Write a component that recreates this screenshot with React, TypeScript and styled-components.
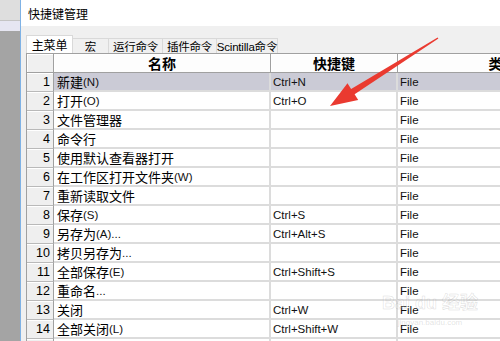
import React from "react";
import styled, { createGlobalStyle } from "styled-components";

const Global = createGlobalStyle`
  html, body { margin: 0; padding: 0; }
  body {
    width: 500px; height: 341px; overflow: hidden;
    background: #a6a6a6;
    font-family: "Liberation Sans", "Noto Sans CJK SC", sans-serif;
  }
`;

const Page = styled.div`
  position: relative;
  display: flex;
  width: 500px;
  height: 341px;
  overflow: hidden;
`;

const SideStrip = styled.div`
  width: 20px;
  flex: none;
  display: flex;
  flex-direction: column;
  border-right: 1px solid #7fb2e5;
`;

const SideTop = styled.div`
  height: 20px;
  background: #dedede;
  border-bottom: 1px solid #c4c4c4;
`;

const SideBand = styled.div`
  height: 10px;
  background: #e6e6f2;
`;

const SideRest = styled.div`
  flex: 1;
  background: #a4a4a4;
`;

const Window = styled.div`
  flex: 1;
  min-width: 0;
  display: flex;
  flex-direction: column;
  background: #fff;
`;

const TitleBar = styled.div`
  height: 26px;
  flex: none;
  display: flex;
  align-items: center;
  padding-left: 7px;
  font-size: 12px;
  color: #000;
  background: #fff;
`;

const Body = styled.div`
  flex: 1;
  background: #f0f0f0;
  padding: 9px 0 0 5px;
  display: flex;
  flex-direction: column;
`;

const TabStrip = styled.div`
  display: flex;
  align-items: flex-end;
  height: 18px;
  flex: none;
`;

const Tab = styled.div<{ $active?: boolean; $w: number }>`
  box-sizing: border-box;
  width: ${(p) => p.$w}px;
  height: ${(p) => (p.$active ? 18 : 15)}px;
  background: ${(p) => (p.$active ? "#fff" : "#f0f0f0")};
  border: 1px solid #d9d9d9;
  border-bottom: none;
  margin-left: ${(p) => (p.$active ? 0 : -1)}px;
  display: flex;
  align-items: center;
  justify-content: center;
  font-size: ${(p) => (p.$active ? 12 : 11.5)}px;
  letter-spacing: -0.2px;
  color: #000;
  white-space: nowrap;
  &:first-child { margin-left: 0; }
`;

const Panel = styled.div`
  flex: 1;
  background: #fff;
  display: flex;
  flex-direction: column;
  min-width: 0;
`;

const Grid = styled.div`
  display: grid;
  grid-template-columns: 27px 217px 127px 210px;
  grid-auto-rows: 19px;
  grid-template-rows: 19px;
  border-top: 1px solid #a0a0a0;
  border-left: 1px solid #a0a0a0;
  width: max-content;
`;

const HeadCell = styled.div<{ $corner?: boolean }>`
  box-sizing: border-box;
  background: ${(p) => (p.$corner ? "#f0f0f0" : "#fdfdfd")};
  border-right: 1px solid #a0a0a0;
  border-bottom: 1px solid #a0a0a0;
  box-shadow: inset 1px 1px 0 #fff;
  display: flex;
  align-items: center;
  justify-content: center;
  font-size: 14px;
  font-weight: bold;
  color: #000;
  white-space: nowrap;
  overflow: hidden;
`;

const NumCell = styled.div`
  box-sizing: border-box;
  background: #efefef;
  border-right: 1px solid #a0a0a0;
  border-bottom: 1px solid #b9b9b9;
  box-shadow: inset 0 1px 0 #fff;
  display: flex;
  align-items: center;
  justify-content: flex-end;
  padding-right: 3px;
  font-size: 12.5px;
  color: #000;
`;

const DataCell = styled.div<{ $sel?: boolean }>`
  box-sizing: border-box;
  background: ${(p) => (p.$sel ? "#cbcbd6" : "#fff")};
  border-right: 2px solid #dcdcdc;
  border-bottom: 2px solid #dcdcdc;
  display: flex;
  align-items: center;
  padding-left: 2px;
  font-size: 11.5px;
  color: #111;
  white-space: nowrap;
  overflow: hidden;
`;

const NameCell = styled(DataCell)`
  padding-left: 3px;
  font-size: 13px;
  color: #000;
`;

const Latin = styled.span`
  font-family: "Liberation Sans", sans-serif;
  font-size: 11.5px;
  color: #111;
`;

const Arrow = styled.svg`
  position: absolute;
  left: 0;
  top: 0;
  pointer-events: none;
`;

const Watermark = styled.div`
  position: absolute;
  left: 382px;
  top: 292px;
  display: flex;
  flex-direction: column;
  align-items: center;
  color: rgba(160, 160, 160, 0.3);
  pointer-events: none;
`;

const WmMain = styled.div`
  font-size: 18px;
  font-weight: bold;
  font-family: "Liberation Sans", "Noto Sans CJK SC", sans-serif;
  -webkit-text-stroke: 0.5px rgba(150, 150, 150, 0.35);
  color: rgba(255, 255, 255, 0.15);
  line-height: 22px;
`;

const WmSub = styled.div`
  font-size: 8px;
  line-height: 10px;
  margin-top: 4px;
`;

const tabs: { label: string; w: number }[] = [
  { label: "主菜单", w: 47 },
  { label: "宏", w: 37 },
  { label: "运行命令", w: 55 },
  { label: "插件命令", w: 55 },
  { label: "Scintilla命令", w: 62 },
];

const rows: [string, string][] = [
  ["新建(N)", "Ctrl+N"],
  ["打开(O)", "Ctrl+O"],
  ["文件管理器", ""],
  ["命令行", ""],
  ["使用默认查看器打开", ""],
  ["在工作区打开文件夹(W)", ""],
  ["重新读取文件", ""],
  ["保存(S)", "Ctrl+S"],
  ["另存为(A)...", "Ctrl+Alt+S"],
  ["拷贝另存为...", ""],
  ["全部保存(E)", "Ctrl+Shift+S"],
  ["重命名...", ""],
  ["关闭", "Ctrl+W"],
  ["全部关闭(L)", "Ctrl+Shift+W"],
  ["关闭当前外的所有文件", ""],
];

function renderName(text: string) {
  const parts = text.split(/([\x00-\x7f]+)/).filter((s) => s.length > 0);
  return parts.map((p, i) =>
    /^[\x00-\x7f]+$/.test(p) ? <Latin key={i}>{p}</Latin> : <span key={i}>{p}</span>
  );
}

// arrow geometry
const tip = { x: 330, y: 106 };
const start = { x: 438, y: 38 };
const dx = start.x - tip.x;
const dy = start.y - tip.y;
const len = Math.hypot(dx, dy);
const ux = dx / len;
const uy = dy / len;
const px = -uy;
const py = ux;
const headLen = 27;
const headHalf = 10;
const bx = tip.x + ux * headLen;
const by = tip.y + uy * headLen;
const neck = 3.2;
const arrowPts = [
  [tip.x, tip.y],
  [bx + px * headHalf, by + py * headHalf],
  [bx + px * neck, by + py * neck],
  [start.x + px * 0.7, start.y + py * 0.7],
  [start.x - px * 0.7, start.y - py * 0.7],
  [bx - px * neck, by - py * neck],
  [bx - px * headHalf, by - py * headHalf],
]
  .map(([x, y]) => `${x.toFixed(1)},${y.toFixed(1)}`)
  .join(" ");

export default function App() {
  return (
    <>
      <Global />
      <Page>
        <SideStrip>
          <SideTop />
          <SideBand />
          <SideRest />
        </SideStrip>
        <Window>
          <TitleBar>快捷键管理</TitleBar>
          <Body>
            <TabStrip>
              {tabs.map((t, i) => (
                <Tab key={t.label} $active={i === 0} $w={t.w}>
                  {t.label}
                </Tab>
              ))}
            </TabStrip>
            <Panel>
              <Grid>
                <HeadCell $corner />
                <HeadCell>名称</HeadCell>
                <HeadCell>快捷键</HeadCell>
                <HeadCell>类型</HeadCell>
                {rows.map(([name, key], i) => (
                  <React.Fragment key={i}>
                    <NumCell>{i + 1}</NumCell>
                    <NameCell $sel={i === 0}>{renderName(name)}</NameCell>
                    <DataCell $sel={i === 0}>{key}</DataCell>
                    <DataCell $sel={i === 0}>File</DataCell>
                  </React.Fragment>
                ))}
              </Grid>
            </Panel>
          </Body>
        </Window>
        <Watermark>
          <WmMain>Bai du 经验</WmMain>
          <WmSub>jingyan.baidu.com</WmSub>
        </Watermark>
        <Arrow width="500" height="341" viewBox="0 0 500 341">
          <polygon points={arrowPts} fill="#ea3a30" />
        </Arrow>
      </Page>
    </>
  );
}
